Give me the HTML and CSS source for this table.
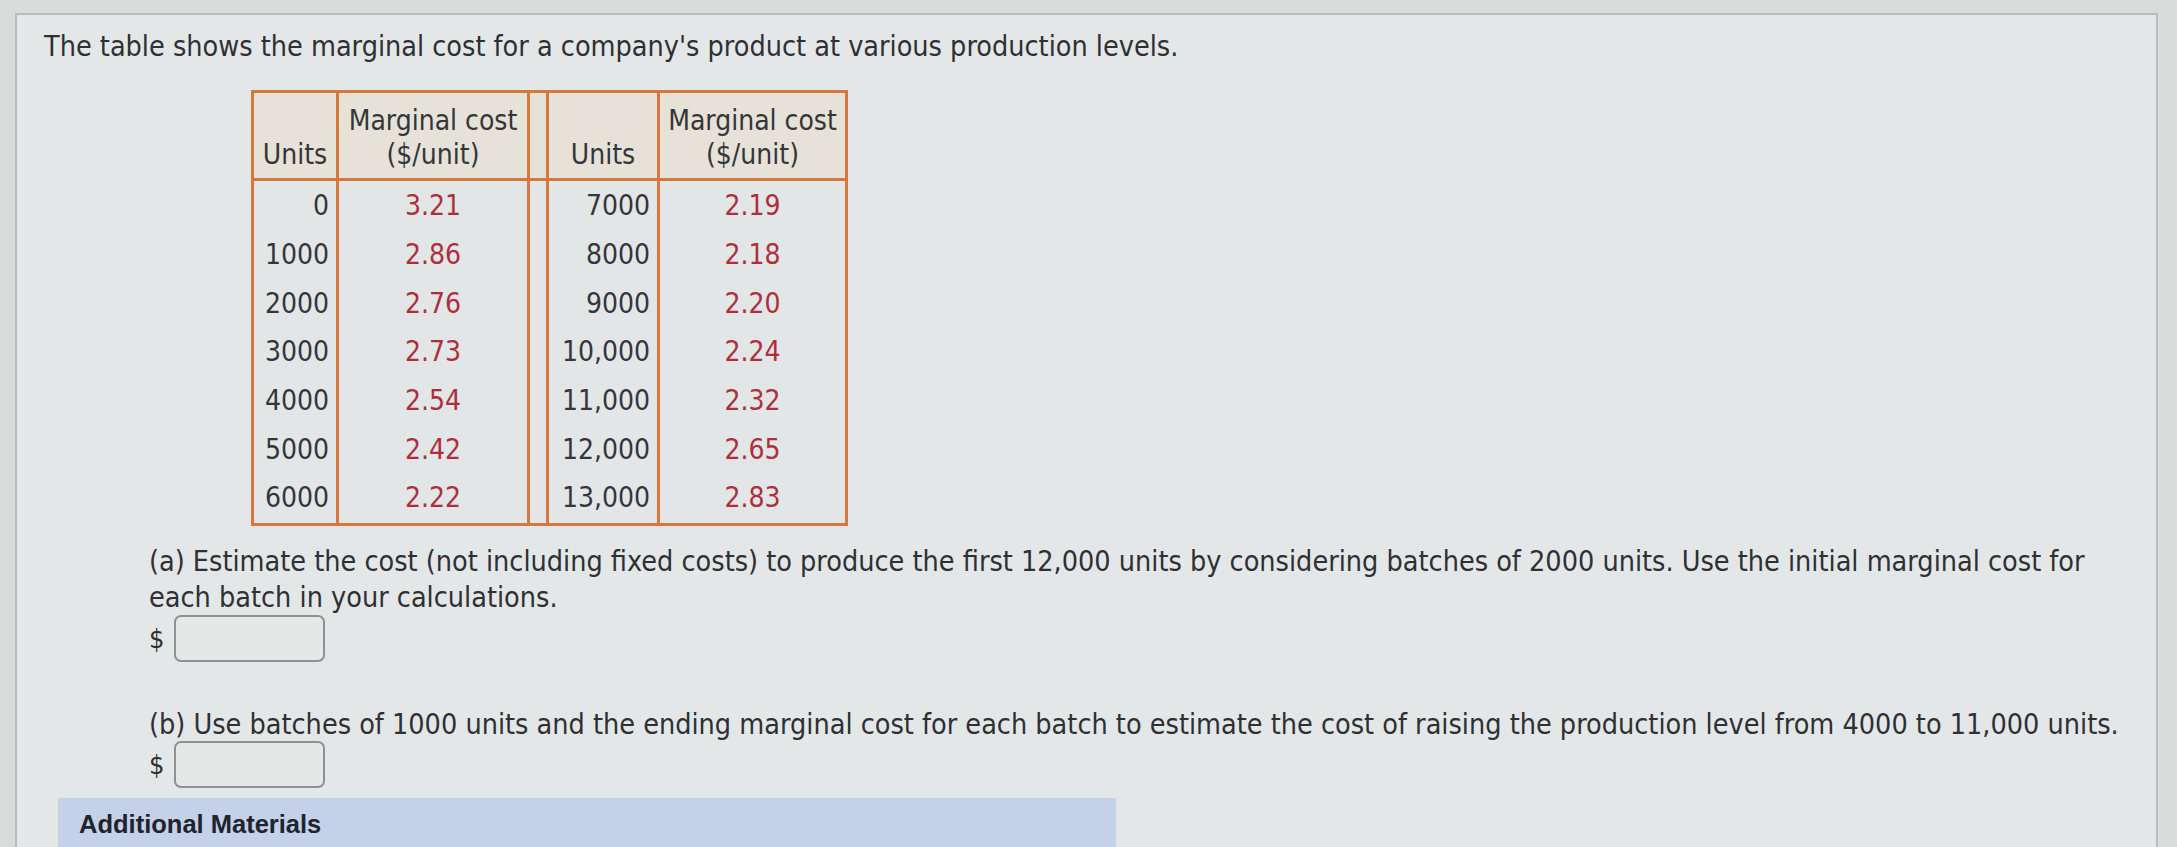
FILE: index.html
```html
<!DOCTYPE html>
<html>
<head>
<meta charset="utf-8">
<link rel="stylesheet" href="styles.css">
</head>
<body>
<div class="topbar"></div>
<div class="panel">
  <p class="intro">The table shows the marginal cost for a company's product at various production levels.</p>
  <table class="mc">
    <thead>
      <tr>
        <th class="u">Units</th>
        <th class="c">Marginal cost<br>($/unit)</th>
        <th class="gap"></th>
        <th class="u2">Units</th>
        <th class="c2">Marginal cost<br>($/unit)</th>
      </tr>
    </thead>
    <tbody>
      <tr><td class="u">0</td><td class="c">3.21</td><td class="gap"></td><td class="u2">7000</td><td class="c2">2.19</td></tr>
      <tr><td class="u">1000</td><td class="c">2.86</td><td class="gap"></td><td class="u2">8000</td><td class="c2">2.18</td></tr>
      <tr><td class="u">2000</td><td class="c">2.76</td><td class="gap"></td><td class="u2">9000</td><td class="c2">2.20</td></tr>
      <tr><td class="u">3000</td><td class="c">2.73</td><td class="gap"></td><td class="u2">10,000</td><td class="c2">2.24</td></tr>
      <tr><td class="u">4000</td><td class="c">2.54</td><td class="gap"></td><td class="u2">11,000</td><td class="c2">2.32</td></tr>
      <tr><td class="u">5000</td><td class="c">2.42</td><td class="gap"></td><td class="u2">12,000</td><td class="c2">2.65</td></tr>
      <tr><td class="u">6000</td><td class="c">2.22</td><td class="gap"></td><td class="u2">13,000</td><td class="c2">2.83</td></tr>
    </tbody>
  </table>
  <div class="part part-a">
    <p class="q">(a) Estimate the cost (not including fixed costs) to produce the first 12,000 units by considering batches of 2000 units. Use the initial marginal cost for<br>each batch in your calculations.</p>
    <div class="answer"><span class="dollar">$</span><span class="box"></span></div>
  </div>
  <div class="part part-b">
    <p class="q">(b) Use batches of 1000 units and the ending marginal cost for each batch to estimate the cost of raising the production level from 4000 to 11,000 units.</p>
    <div class="answer"><span class="dollar">$</span><span class="box"></span></div>
  </div>
  <div class="materials">Additional Materials</div>
</div>
</body>
</html>
```

FILE: styles.css
```css
html, body {
  margin: 0;
  padding: 0;
}
body {
  background: #d9dcdb;
  font-family: "DejaVu Sans Condensed", "DejaVu Sans", sans-serif;
  font-stretch: condensed;
  color: #2e3033;
  width: 2177px;
  height: 847px;
  overflow: hidden;
}
.topbar {
  height: 13px;
}
.panel {
  margin-left: 15px;
  width: 2143px;
  height: 900px;
  box-sizing: border-box;
  border: 2px solid #b8bcbd;
  border-bottom: none;
  background: #e4e7e7;
  padding: 0 0 0 27px;
}
.intro {
  margin: 14px 0 0 0;
  font-size: 28.5px;
  line-height: 36px;
  white-space: nowrap;
}
.mc {
  margin: 25px 0 0 207px;
  border-collapse: collapse;
  border: 3px solid #d5783f;
  font-size: 28px;
}
.mc th, .mc td {
  border-left: 3px solid #d5783f;
  border-right: 3px solid #d5783f;
  padding: 0 7px;
}
.mc thead th {
  background: #e6e2d8;
  font-weight: normal;
  height: 79px;
  line-height: 34px;
  vertical-align: bottom;
  padding-bottom: 6px;
  color: #34363a;
  border-bottom: 3px solid #d5783f;
}
.mc tbody td {
  background: #e3e6e6;
  height: 48.6px;
  line-height: 30px;
  padding-top: 0;
  padding-bottom: 0;
}
.mc tbody tr:first-child td {
  height: 50px;
}
.mc tbody tr:last-child td {
  height: 49px;
}
.mc .u { width: 68px; text-align: right; }
.mc .c { width: 174px; text-align: center; }
.mc .gap { width: 16px; padding: 0; }
.mc .u2 { width: 94px; text-align: right; }
.mc .c2 { width: 171px; text-align: center; }
.mc th.u { text-align: center; padding: 0 3px 6px; width: 76px; }
.mc th.u2 { text-align: center; }
.mc td.c, .mc td.c2 { color: #ad2f3b; }
.mc td.u, .mc td.u2 { color: #34363a; }
.part {
  margin-left: 105px;
}
.part-a {
  margin-top: 18px;
}
.part-b {
  margin-top: 45px;
}
.q {
  margin: 0;
  font-size: 28.5px;
  line-height: 36.5px;
  white-space: nowrap;
}
.answer {
  display: flex;
  align-items: center;
  height: 47px;
  margin-top: -2px;
}
.dollar {
  font-size: 27px;
  width: 25px;
}
.box {
  display: block;
  width: 147px;
  height: 43px;
  border: 2px solid #8d9193;
  border-radius: 7px;
  background: #e6e8e8;
}
.materials {
  margin: 10px 0 0 14px;
  width: 1058px;
  height: 60px;
  box-sizing: border-box;
  background: #c4d1e8;
  padding: 0 0 0 21px;
  line-height: 52px;
  font-family: "Liberation Sans", Arial, sans-serif;
  font-stretch: normal;
  font-weight: bold;
  font-size: 25.5px;
  color: #20242c;
}
```
